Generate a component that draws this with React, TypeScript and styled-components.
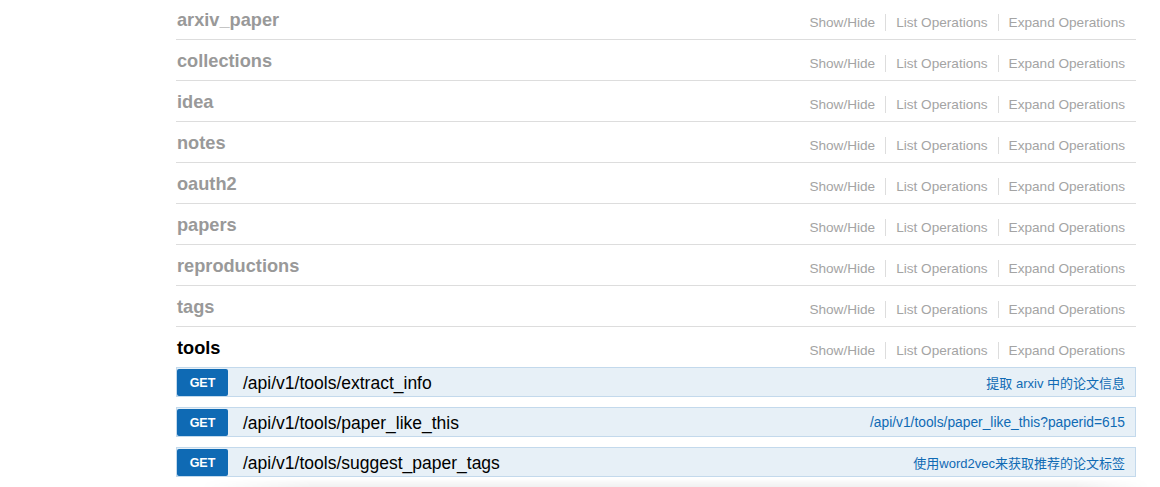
import React from "react";
import styled, { createGlobalStyle } from "styled-components";

const Global = createGlobalStyle`
  html, body { margin: 0; padding: 0; background: #fff; }
  body { font-family: "Liberation Sans", "Noto Sans CJK SC", Arial, sans-serif; overflow: hidden; }
`;

const Page = styled.div`
  width: 1160px;
  height: 487px;
  overflow: hidden;
  position: relative;
`;

const Resources = styled.ul`
  list-style: none;
  margin: -1px 0 0 176px;
  padding: 0;
  width: 960px;
`;

const Heading = styled.div<{ $last?: boolean }>`
  display: flex;
  align-items: center;
  justify-content: space-between;
  height: 40px;
  border-bottom: ${(p) => (p.$last ? "none" : "1px solid #ddd")};
`;

const Title = styled.h2<{ $active?: boolean }>`
  margin: 2px 0 0 1px;
  font-size: 18.2px;
  font-weight: bold;
  color: ${(p) => (p.$active ? "#000" : "#999")};
  font-family: "Liberation Sans", Arial, sans-serif;
`;

const Options = styled.ul`
  list-style: none;
  display: flex;
  margin: 6px 11px 0 0;
  padding: 0;
`;

const Option = styled.li<{ $last?: boolean }>`
  font-size: 13.6px;
  color: #a4a4a4;
  padding: 1px ${(p) => (p.$last ? "0" : "10px")} 1px 10px;
  border-right: ${(p) => (p.$last ? "none" : "1px solid #ddd")};
  line-height: 15px;
`;

const OpBar = styled.div`
  display: flex;
  align-items: center;
  height: 28px;
  background: #e7f0f7;
  border: 1px solid #c3d9ec;
  margin-bottom: 10px;
`;

const Method = styled.span`
  display: flex;
  align-items: center;
  justify-content: center;
  width: 51px;
  height: 27px;
  margin-top: 1px;
  background: #0f6ab4;
  color: #fff;
  font-size: 12.5px;
  font-weight: bold;
  border-radius: 2px;
  flex: none;
`;

const Path = styled.span`
  margin: 2px 0 0 15px;
  font-size: 17.5px;
  color: #000;
  flex: 1;
`;

const Summary = styled.span<{ $cjk?: boolean }>`
  font-size: ${(p) => (p.$cjk ? "13px" : "13.8px")};
  color: #0f6ab4;
  margin: 1px 10px 0 0;
  font-family: "Liberation Sans", "Noto Sans CJK SC", sans-serif;
`;

const Fade = styled.div`
  position: absolute;
  left: 200px;
  right: 10px;
  top: 478px;
  height: 9px;
  background: linear-gradient(to bottom, rgba(0,0,0,0), rgba(0,0,0,0.06));
  -webkit-mask-image: linear-gradient(to right, transparent, #000 12%, #000 92%, transparent);
  mask-image: linear-gradient(to right, transparent, #000 12%, #000 92%, transparent);
`;

const names = ["arxiv_paper", "collections", "idea", "notes", "oauth2", "papers", "reproductions", "tags", "tools"];

const ops = [
  { path: "/api/v1/tools/extract_info", summary: "提取 arxiv 中的论文信息", cjk: true },
  { path: "/api/v1/tools/paper_like_this", summary: "/api/v1/tools/paper_like_this?paperid=615", cjk: false },
  { path: "/api/v1/tools/suggest_paper_tags", summary: "使用word2vec来获取推荐的论文标签", cjk: true },
];

export default function App() {
  return (
    <Page>
      <Global />
      <Resources>
        {names.map((n) => {
          const last = n === "tools";
          return (
            <li key={n}>
              <Heading $last={last}>
                <Title $active={last}>{n}</Title>
                <Options>
                  <Option>Show/Hide</Option>
                  <Option>List Operations</Option>
                  <Option $last>Expand Operations</Option>
                </Options>
              </Heading>
              {last &&
                ops.map((o) => (
                  <OpBar key={o.path}>
                    <Method>GET</Method>
                    <Path>{o.path}</Path>
                    <Summary $cjk={o.cjk}>{o.summary}</Summary>
                  </OpBar>
                ))}
            </li>
          );
        })}
      </Resources>
      <Fade />
    </Page>
  );
}
